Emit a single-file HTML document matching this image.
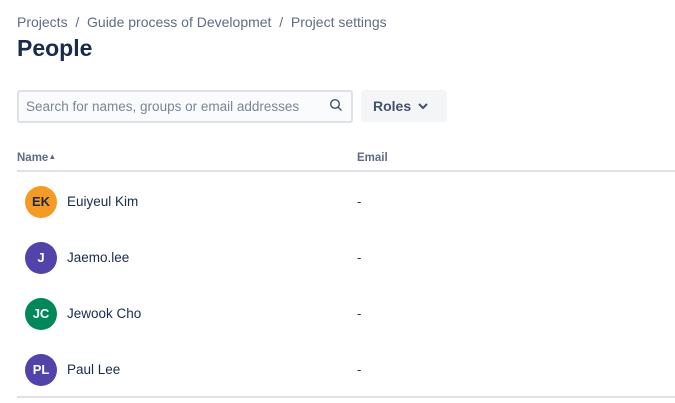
<!DOCTYPE html><html><head><style>
body{margin:0;width:675px;height:403px;background:#fff;font-family:"Liberation Sans",sans-serif;position:relative;overflow:hidden;color:#172b4d}
.a{position:absolute}
.bc{left:17px;top:14px;font-size:14px;color:#5e6c84;white-space:nowrap}
.t{left:17px;top:35px;font-size:23px;font-weight:bold;color:#172b4d}
.s{left:17px;top:90px;width:332px;height:29px;border:2px solid #dfe1e6;border-radius:3px;background:#fafbfc}
.s span{position:absolute;left:7px;top:7px;font-size:13.5px;color:#7a869a}
.r{left:361px;top:90px;width:86px;height:32px;background:#f4f5f7;border-radius:3px;font-size:14px;color:#42526e}
.h{top:152px;font-size:11.5px;font-weight:bold;color:#5e6c84}
.ln{left:17px;width:658px;height:2px;background:#dfe1e6}
.av{left:25px;width:32px;height:32px;border-radius:50%;color:#fff;font-size:13px;font-weight:bold;text-align:center;line-height:32px}
.nm{left:67px;font-size:13.5px;color:#172b4d}
.d{left:357px;font-size:13px;color:#172b4d}
</style></head><body>
<div class="a bc">Projects &nbsp;/&nbsp; Guide process of Developmet &nbsp;/&nbsp; Project settings</div>
<div class="a t">People</div>
<div class="a s"><span>Search for names, groups or email addresses</span>
<svg style="position:absolute;left:310px;top:6px" width="14" height="14" viewBox="0 0 14 14"><circle cx="6" cy="6" r="4.3" fill="none" stroke="#42526e" stroke-width="1.4"/><path d="M9.2 9.2L12.5 12.5" stroke="#42526e" stroke-width="1.4"/></svg></div>
<div class="a r"><span style="position:absolute;left:12px;top:8px;font-weight:bold">Roles</span>
<svg style="position:absolute;left:56px;top:11px" width="12" height="10" viewBox="0 0 12 10"><path d="M2 3l4 4 4-4" fill="none" stroke="#42526e" stroke-width="2"/></svg></div>
<div class="a h" style="left:17px">Name<span style="font-size:8px;vertical-align:top">&#9650;</span></div>
<div class="a h" style="left:357px">Email</div>
<div class="a ln" style="top:170px"></div>
<div class="a av" style="top:186px;background:#f79a24;color:#172b4d">EK</div><div class="a nm" style="top:194px">Euiyeul Kim</div><div class="a d" style="top:194px">-</div>
<div class="a av" style="top:242px;background:#5243aa">J</div><div class="a nm" style="top:250px">Jaemo.lee</div><div class="a d" style="top:250px">-</div>
<div class="a av" style="top:298px;background:#00875a">JC</div><div class="a nm" style="top:306px">Jewook Cho</div><div class="a d" style="top:306px">-</div>
<div class="a av" style="top:354px;background:#5243aa">PL</div><div class="a nm" style="top:362px">Paul Lee</div><div class="a d" style="top:362px">-</div>
<div class="a ln" style="top:396px"></div>
</body></html>
